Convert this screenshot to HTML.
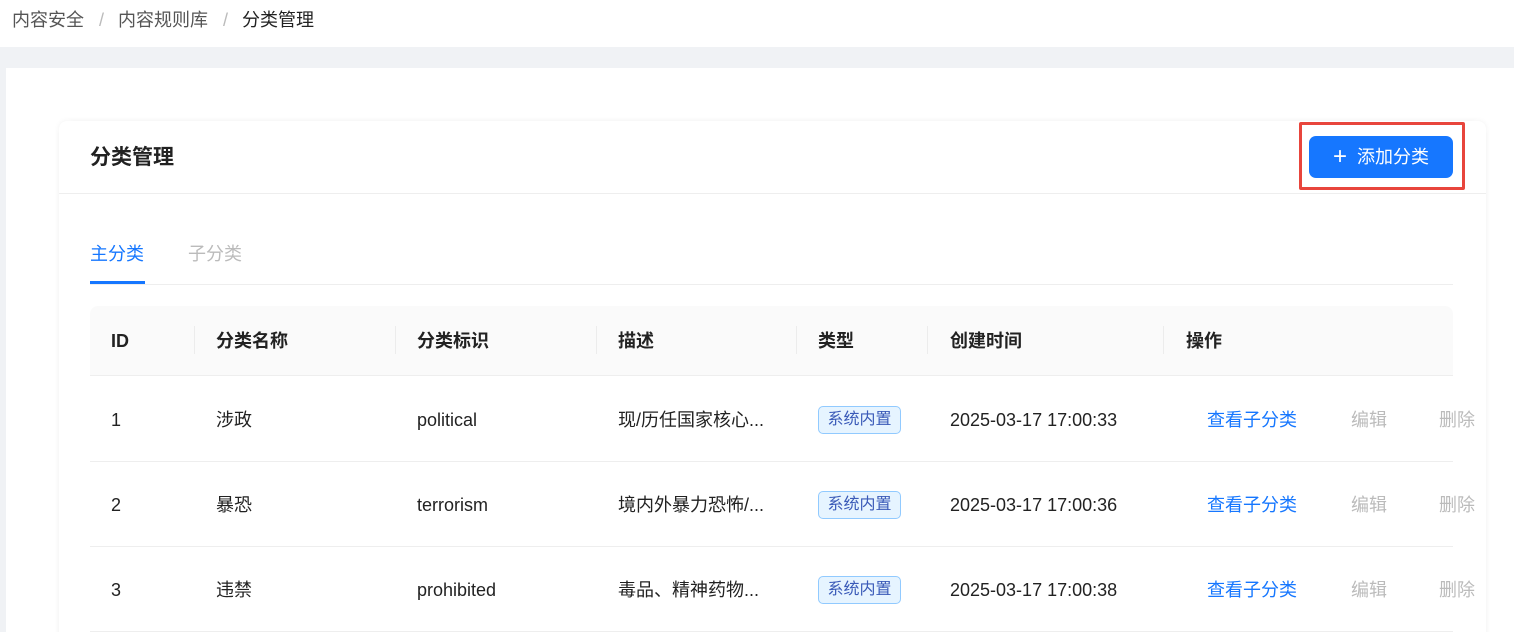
<!DOCTYPE html>
<html><head><meta charset="utf-8"><style>
*{margin:0;padding:0;box-sizing:border-box}
html,body{width:1514px;height:632px;overflow:hidden}
body{background:#f0f2f5;font-family:"Liberation Sans","Noto Sans CJK SC",sans-serif;color:#222;position:relative}
.bc{position:absolute;left:0;top:0;width:1514px;height:47px;background:#fff;font-size:18px;line-height:24px;color:#555;padding:8px 0 0 12px;white-space:nowrap}
.bc span.s{color:#bbb;margin:0 14px 0 15px}
.bc b{font-weight:normal;color:#222}
.panel{position:absolute;left:6px;top:68px;width:1508px;height:564px;background:#fff}
.card{position:absolute;left:59px;top:121px;width:1427px;height:540px;background:#fff;border-radius:8px;box-shadow:0 0 6px rgba(0,0,0,.06)}
.t{position:absolute;font-size:18px;line-height:24px;white-space:nowrap}
.hline{position:absolute;height:1px;background:#eee}
.btn{position:absolute;left:1309px;top:136px;width:144px;height:42px;background:#1677ff;border-radius:7px;color:#fff;font-size:18px;line-height:42px;text-align:center}
.red{position:absolute;left:1299px;top:122px;width:166px;height:68px;border:3px solid #e8453c;border-radius:2px}
.th{position:absolute;left:90px;top:306px;width:1363px;height:70px;background:#fafafa;border-radius:8px 8px 0 0;border-bottom:1px solid #eee}
.sep{position:absolute;top:326px;width:1px;height:28px;background:#ececec}
.tag{position:absolute;left:818px;width:83px;height:28px;border:1px solid #91caff;background:#e6f4ff;color:#3a5ab8;border-radius:5px;font-size:16px;line-height:26px;text-align:center}
.lk{color:#1677ff}.dis{color:#bbb}
</style></head><body>
<div class="bc">内容安全<span class="s">/</span>内容规则库<span class="s">/</span><b>分类管理</b></div>
<div class="panel"></div>
<div class="card"></div>
<div class="t" style="left:90px;top:145px;font-size:21px;line-height:26px;font-weight:bold">分类管理</div>
<div class="hline" style="left:59px;top:193px;width:1427px"></div>
<div class="red"></div>
<div class="btn"><span style="font-size:24px;vertical-align:-1px;margin-right:10px">+</span>添加分类</div>
<div class="t" style="left:90px;top:242px;color:#1677ff">主分类</div>
<div class="t" style="left:188px;top:242px;color:#bbb">子分类</div>
<div style="position:absolute;left:90px;top:281px;width:55px;height:3px;background:#1677ff"></div>
<div class="hline" style="left:90px;top:284px;width:1363px"></div>
<div class="th"></div>
<div class="sep" style="left:194px"></div><div class="sep" style="left:395px"></div><div class="sep" style="left:596px"></div><div class="sep" style="left:796px"></div><div class="sep" style="left:927px"></div><div class="sep" style="left:1163px"></div>
<div class="t" style="left:111px;top:329px;font-weight:bold">ID</div>
<div class="t" style="left:216px;top:329px;font-weight:bold">分类名称</div>
<div class="t" style="left:417px;top:329px;font-weight:bold">分类标识</div>
<div class="t" style="left:618px;top:329px;font-weight:bold">描述</div>
<div class="t" style="left:818px;top:329px;font-weight:bold">类型</div>
<div class="t" style="left:950px;top:329px;font-weight:bold">创建时间</div>
<div class="t" style="left:1186px;top:329px;font-weight:bold">操作</div>

<div class="t" style="left:111px;top:408px">1</div><div class="t" style="left:216px;top:408px">涉政</div><div class="t" style="left:417px;top:408px">political</div><div class="t" style="left:618px;top:408px">现/历任国家核心...</div><div class="tag" style="top:406px">系统内置</div><div class="t" style="left:950px;top:408px">2025-03-17 17:00:33</div><div class="t lk" style="left:1207px;top:408px">查看子分类</div><div class="t dis" style="left:1351px;top:408px">编辑</div><div class="t dis" style="left:1439px;top:408px">删除</div>
<div class="hline" style="left:90px;top:461px;width:1363px"></div>
<div class="t" style="left:111px;top:493px">2</div><div class="t" style="left:216px;top:493px">暴恐</div><div class="t" style="left:417px;top:493px">terrorism</div><div class="t" style="left:618px;top:493px">境内外暴力恐怖/...</div><div class="tag" style="top:491px">系统内置</div><div class="t" style="left:950px;top:493px">2025-03-17 17:00:36</div><div class="t lk" style="left:1207px;top:493px">查看子分类</div><div class="t dis" style="left:1351px;top:493px">编辑</div><div class="t dis" style="left:1439px;top:493px">删除</div>
<div class="hline" style="left:90px;top:546px;width:1363px"></div>
<div class="t" style="left:111px;top:578px">3</div><div class="t" style="left:216px;top:578px">违禁</div><div class="t" style="left:417px;top:578px">prohibited</div><div class="t" style="left:618px;top:578px">毒品、精神药物...</div><div class="tag" style="top:576px">系统内置</div><div class="t" style="left:950px;top:578px">2025-03-17 17:00:38</div><div class="t lk" style="left:1207px;top:578px">查看子分类</div><div class="t dis" style="left:1351px;top:578px">编辑</div><div class="t dis" style="left:1439px;top:578px">删除</div>
<div class="hline" style="left:90px;top:631px;width:1363px"></div>
</body></html>
